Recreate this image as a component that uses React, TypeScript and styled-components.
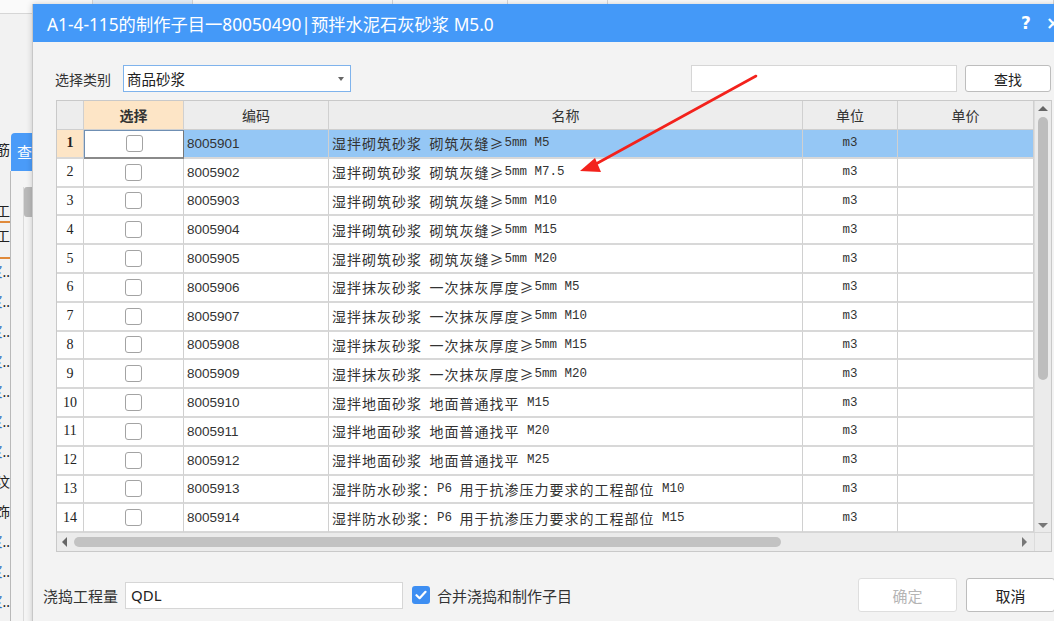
import React from 'react'
import styled, { createGlobalStyle, css } from 'styled-components'

const GlobalStyle = createGlobalStyle`
  html, body {
    margin: 0;
    padding: 0;
    overflow: hidden;
    background: #f2f2f2;
    font-family: "Noto Sans", "Noto Sans CJK SC", sans-serif;
    color: #333;
  }
  * { box-sizing: border-box; }
`

const COLS = '27px 100px 145px 474px 95px 136px'

const Desktop = styled.div`
  position: relative;
  width: 1054px;
  height: 621px;
  overflow: hidden;
  display: flex;
  flex-direction: column;
  background: #f2f2f2;
`

const TopStrip = styled.div`
  height: 14px;
  display: flex;
  background: #fafafa;
  border-bottom: 1px solid #d6d6d6;
`

const StripCell = styled.div<{ $w: number; $tint?: boolean }>`
  width: ${(p) => p.$w}px;
  flex-shrink: 0;
  border-right: 1px solid #d6d6d6;
  background: ${(p) => (p.$tint ? '#e4eef9' : 'transparent')};
`

const Workspace = styled.div`
  flex: 1;
  display: flex;
`

const SideList = styled.div`
  width: 10px;
  overflow: hidden;
  display: flex;
  flex-direction: column;
  padding-top: 123px;
`

const SideItem = styled.div<{ $blue?: boolean; $mark?: boolean; $h?: number }>`
  height: ${(p) => p.$h ?? 30}px;
  flex-shrink: 0;
  display: flex;
  justify-content: flex-end;
  white-space: nowrap;
  font-size: 14px;
  line-height: 26px;
  color: #222;
  ${(p) =>
    p.$blue &&
    css`
      b {
        font-weight: 400;
        color: #2f6fbf;
      }
    `}
  ${(p) =>
    p.$mark &&
    css`
      span {
        border-bottom: 2px solid #e08a3a;
      }
    `}
`

const SidePanel = styled.div`
  width: 22px;
  display: flex;
  flex-direction: column;
  padding-top: 119px;
`

const SideTab = styled.div`
  margin-left: 1px;
  height: 38px;
  background: #4a9bf8;
  border-radius: 4px 0 0 0;
  color: #fff;
  font-size: 15px;
  padding: 8px 0 0 6px;
  overflow: hidden;
  white-space: nowrap;
`

const SideBody = styled.div`
  flex: 1;
  display: flex;
  border-left: 1px solid #b9b9b9;
  background: #f4f4f4;
  padding-top: 16px;
`

const SideScroll = styled.div`
  margin-left: 12px;
  width: 9px;
  border-left: 1px solid #dadada;
  display: flex;
  flex-direction: column;
  align-items: flex-end;
`

const SideThumb = styled.div`
  width: 8px;
  height: 30px;
  background: #b9b9b9;
  border-radius: 3px 0 0 3px;
`

const Dialog = styled.div`
  position: absolute;
  left: 32px;
  top: 4px;
  width: 1036px;
  height: 640px;
  background: #f3f3f3;
  border-left: 1px solid #c7c7c7;
  box-shadow: 0 0 6px rgba(0, 0, 0, 0.18);
  display: flex;
  flex-direction: column;
`

const TitleBar = styled.div`
  height: 38px;
  background: #4499f8;
  color: #fff;
  display: flex;
  align-items: center;
  padding-left: 14px;
  font-size: 17.3px;
`

const TitleText = styled.div`
  flex: 1;
  white-space: nowrap;
`

const TitleButton = styled.div<{ $w: number }>`
  width: ${(p) => p.$w}px;
  text-align: center;
  font-size: 17px;
  font-weight: 700;
  font-family: "DejaVu Sans", sans-serif;
`

const Body = styled.div`
  flex: 1;
  display: flex;
  flex-direction: column;
  padding: 23px 17px 0 10px;
`

const FilterRow = styled.div`
  display: flex;
  align-items: center;
  height: 27px;
  margin-left: 12px;
`

const Label = styled.div<{ $w?: number; $size?: number }>`
  width: ${(p) => (p.$w ? `${p.$w}px` : 'auto')};
  flex-shrink: 0;
  font-size: ${(p) => p.$size ?? 14}px;
  color: #333;
  white-space: nowrap;
`

const Select = styled.div`
  width: 228px;
  height: 27px;
  background: #fff;
  border: 1px solid #7fb3ec;
  display: flex;
  align-items: center;
  padding: 0 5px 0 3px;
  font-size: 14.5px;
  color: #222;
`

const SelectValue = styled.div`
  flex: 1;
`

const Caret = styled.div`
  width: 0;
  height: 0;
  border-left: 3.5px solid transparent;
  border-right: 3.5px solid transparent;
  border-top: 4px solid #666;
  margin-right: 1px;
`

const Spacer = styled.div<{ $w?: number }>`
  flex: ${(p) => (p.$w ? `0 0 ${p.$w}px` : '1')};
`

const TextBox = styled.div<{ $w: number; $h: number }>`
  width: ${(p) => p.$w}px;
  height: ${(p) => p.$h}px;
  background: #fff;
  border: 1px solid #d6d6d6;
  display: flex;
  align-items: center;
  padding-left: 5px;
  font-size: 15px;
  color: #222;
`

const Button = styled.div<{ $w: number; $h: number; $disabled?: boolean; $size?: number }>`
  width: ${(p) => p.$w}px;
  height: ${(p) => p.$h}px;
  flex-shrink: 0;
  background: #fff;
  border: 1px solid ${(p) => (p.$disabled ? '#dedede' : '#bdbdbd')};
  border-radius: 3px;
  display: flex;
  align-items: center;
  justify-content: center;
  font-size: ${(p) => p.$size ?? 14}px;
  color: ${(p) => (p.$disabled ? '#b5b5b5' : '#222')};
`

const TableFrame = styled.div`
  margin: 8px 0 0 13px;
  width: 996px;
  height: 452px;
  border: 1px solid #c9c9c9;
  display: flex;
  flex-direction: column;
  background: #fff;
`

const TableMain = styled.div`
  flex: 1;
  display: flex;
  overflow: hidden;
`

const Grid = styled.div`
  flex: 1;
  display: flex;
  flex-direction: column;
  overflow: hidden;
`

const HeaderRow = styled.div`
  display: grid;
  grid-template-columns: ${COLS};
  height: 29px;
  flex-shrink: 0;
  background: #ededed;
  border-bottom: 1px solid #cfcfcf;
`

const HeadCell = styled.div<{ $accent?: boolean }>`
  border-right: 1px solid #d0d0d0;
  display: flex;
  align-items: center;
  justify-content: center;
  font-size: 14px;
  color: #333;
  background: ${(p) => (p.$accent ? '#fde5c6' : 'transparent')};
  font-weight: ${(p) => (p.$accent ? 700 : 400)};
`

const Row = styled.div`
  display: grid;
  grid-template-columns: ${COLS};
  height: 28.8px;
  flex-shrink: 0;
`

const Cell = styled.div<{ $sel?: boolean; $align?: 'center' | 'left' }>`
  border-right: 1px solid #d0d0d0;
  border-bottom: 2px solid #d8d8d8;
  display: flex;
  align-items: center;
  justify-content: ${(p) => (p.$align === 'left' ? 'flex-start' : 'center')};
  padding-left: ${(p) => (p.$align === 'left' ? '3px' : '0')};
  background: ${(p) => (p.$sel ? '#95c7f5' : '#fff')};
  white-space: nowrap;
  overflow: hidden;
  color: #333;
`

const NumCell = styled(Cell)<{ $current?: boolean }>`
  background: ${(p) => (p.$current ? '#fde5c6' : '#fff')};
  font-family: "Liberation Serif", serif;
  font-size: 14px;
  font-weight: ${(p) => (p.$current ? 700 : 400)};
  color: #222;
`

const CheckCell = styled(Cell)<{ $focus?: boolean }>`
  ${(p) =>
    p.$focus &&
    css`
      border: 1px solid #6f8fb3;
      border-right-color: #777;
      border-bottom: 2px solid #8a8a8a;
    `}
`

const CodeText = styled.span`
  font-family: "Liberation Sans", sans-serif;
  font-size: 13.5px;
  color: #333;
`

const Han = styled.span`
  font-family: "Noto Sans CJK SC", sans-serif;
  font-size: 14px;
  letter-spacing: 1px;
  color: #333;
`

const Latin = styled.span`
  font-family: "Liberation Mono", monospace;
  font-size: 12.5px;
  white-space: pre;
  color: #333;
`

const UnitText = styled.span`
  font-family: "Liberation Mono", monospace;
  font-size: 12.5px;
  color: #333;
`

const Box = styled.div`
  width: 17px;
  height: 17px;
  border: 1px solid #a3a3a3;
  border-radius: 3px;
  background: #fff;
`

const VScroll = styled.div`
  width: 17px;
  flex-shrink: 0;
  background: #ebebeb;
  border-left: 1px solid #dcdcdc;
  display: flex;
  flex-direction: column;
  align-items: center;
  padding: 5px 0 4px;
`

const VThumb = styled.div`
  width: 10px;
  height: 263px;
  margin-top: 6px;
  border-radius: 5px;
  background: #bdbdbd;
`

const Arrow = styled.div<{ $dir: 'up' | 'down' | 'left' | 'right' }>`
  width: 0;
  height: 0;
  ${(p) =>
    p.$dir === 'up' &&
    css`
      border-left: 5px solid transparent;
      border-right: 5px solid transparent;
      border-bottom: 5px solid #666;
    `}
  ${(p) =>
    p.$dir === 'down' &&
    css`
      border-left: 5px solid transparent;
      border-right: 5px solid transparent;
      border-top: 5px solid #777;
    `}
  ${(p) =>
    p.$dir === 'left' &&
    css`
      border-top: 5px solid transparent;
      border-bottom: 5px solid transparent;
      border-right: 5px solid #666;
    `}
  ${(p) =>
    p.$dir === 'right' &&
    css`
      border-top: 5px solid transparent;
      border-bottom: 5px solid transparent;
      border-left: 5px solid #777;
    `}
`

const HScroll = styled.div`
  height: 19px;
  flex-shrink: 0;
  display: flex;
  align-items: center;
  background: #ebebeb;
  border-top: 1px solid #d6d6d6;
  padding-left: 5px;
`

const HTrack = styled.div`
  flex: 1;
  display: flex;
  align-items: center;
  padding-left: 7px;
`

const HThumb = styled.div`
  width: 707px;
  height: 10px;
  border-radius: 5px;
  background: #c2c2c2;
`

const Corner = styled.div`
  width: 17px;
  height: 100%;
  margin-left: 7px;
  background: #ececec;
  border-left: 1px solid #dcdcdc;
`

const BottomRow = styled.div`
  display: flex;
  align-items: center;
  height: 34px;
  margin-top: 26px;
  margin-right: -4px;
`

const Checked = styled.div`
  width: 18px;
  height: 18px;
  margin: 0 7px 0 9px;
  border-radius: 3px;
  background: #3d8ef2;
  display: flex;
  align-items: center;
  justify-content: center;
`

const Annotation = styled.svg`
  position: absolute;
  left: 0;
  top: 0;
  pointer-events: none;
`

type Item = { code: string; name: string }

const items: Item[] = [
  { code: '8005901', name: '湿拌砌筑砂浆 砌筑灰缝≥5mm M5' },
  { code: '8005902', name: '湿拌砌筑砂浆 砌筑灰缝≥5mm M7.5' },
  { code: '8005903', name: '湿拌砌筑砂浆 砌筑灰缝≥5mm M10' },
  { code: '8005904', name: '湿拌砌筑砂浆 砌筑灰缝≥5mm M15' },
  { code: '8005905', name: '湿拌砌筑砂浆 砌筑灰缝≥5mm M20' },
  { code: '8005906', name: '湿拌抹灰砂浆 一次抹灰厚度≥5mm M5' },
  { code: '8005907', name: '湿拌抹灰砂浆 一次抹灰厚度≥5mm M10' },
  { code: '8005908', name: '湿拌抹灰砂浆 一次抹灰厚度≥5mm M15' },
  { code: '8005909', name: '湿拌抹灰砂浆 一次抹灰厚度≥5mm M20' },
  { code: '8005910', name: '湿拌地面砂浆 地面普通找平 M15' },
  { code: '8005911', name: '湿拌地面砂浆 地面普通找平 M20' },
  { code: '8005912', name: '湿拌地面砂浆 地面普通找平 M25' },
  { code: '8005913', name: '湿拌防水砂浆：P6 用于抗渗压力要求的工程部位 M10' },
  { code: '8005914', name: '湿拌防水砂浆：P6 用于抗渗压力要求的工程部位 M15' },
]

type Side = { t: string; dots?: boolean; mark?: boolean; h?: number }

const sideItems: Side[] = [
  { t: '钢筋', h: 61 },
  { t: '人工', mark: true, h: 25 },
  { t: '人工', mark: true, h: 36 },
  { t: '砂浆', dots: true },
  { t: '砂浆', dots: true },
  { t: '砂浆', dots: true },
  { t: '砂浆', dots: true },
  { t: '砂浆', dots: true },
  { t: '砂浆', dots: true },
  { t: '砂浆', dots: true },
  { t: '混凝土浇汶' },
  { t: '装饰' },
  { t: '砂浆', dots: true },
  { t: '砂浆', dots: true },
  { t: '砂浆', dots: true },
]

// ascii runs are half width (mono), the rest full width
const renderName = (s: string) =>
  s
    .split(/([\x20-\x7e]+)/)
    .filter(Boolean)
    .map((part, i) =>
      /^[\x20-\x7e]+$/.test(part) ? <Latin key={i}>{part}</Latin> : <Han key={i}>{part}</Han>
    )

export default function App() {
  return (
    <Desktop>
      <GlobalStyle />
      <TopStrip>
        <StripCell $w={93} />
        <StripCell $w={100} $tint />
        <StripCell $w={200} />
        <StripCell $w={115} />
        <StripCell $w={100} />
        <StripCell $w={446} />
      </TopStrip>
      <Workspace>
        <SideList>
          {sideItems.map((s, i) => (
            <SideItem key={i} $blue={s.dots} $mark={s.mark} $h={s.h}>
              <span>
                {s.dots ? <b>{s.t}</b> : s.t}
                {s.dots && '..'}
              </span>
            </SideItem>
          ))}
        </SideList>
        <SidePanel>
          <SideTab>查</SideTab>
          <SideBody>
            <SideScroll>
              <SideThumb />
            </SideScroll>
          </SideBody>
        </SidePanel>
      </Workspace>

      <Dialog>
        <TitleBar>
          <TitleText>A1-4-115的制作子目一80050490|预拌水泥石灰砂浆 M5.0</TitleText>
          <TitleButton $w={24}>?</TitleButton>
          <TitleButton $w={30}>×</TitleButton>
        </TitleBar>
        <Body>
          <FilterRow>
            <Label $w={68}>选择类别</Label>
            <Select>
              <SelectValue>商品砂浆</SelectValue>
              <Caret />
            </Select>
            <Spacer />
            <TextBox $w={266} $h={27} />
            <Spacer $w={8} />
            <Button $w={86} $h={27}>
              查找
            </Button>
          </FilterRow>

          <TableFrame>
            <TableMain>
              <Grid>
                <HeaderRow>
                  <HeadCell />
                  <HeadCell $accent>选择</HeadCell>
                  <HeadCell>编码</HeadCell>
                  <HeadCell>名称</HeadCell>
                  <HeadCell>单位</HeadCell>
                  <HeadCell>单价</HeadCell>
                </HeaderRow>
                {items.map((it, i) => {
                  const sel = i === 0
                  return (
                    <Row key={it.code}>
                      <NumCell $current={sel}>{i + 1}</NumCell>
                      <CheckCell $focus={sel}>
                        <Box />
                      </CheckCell>
                      <Cell $sel={sel} $align="left">
                        <CodeText>{it.code}</CodeText>
                      </Cell>
                      <Cell $sel={sel} $align="left">
                        {renderName(it.name)}
                      </Cell>
                      <Cell $sel={sel}>
                        <UnitText>m3</UnitText>
                      </Cell>
                      <Cell $sel={sel} />
                    </Row>
                  )
                })}
              </Grid>
              <VScroll>
                <Arrow $dir="up" />
                <VThumb />
                <Spacer />
                <Arrow $dir="down" />
              </VScroll>
            </TableMain>
            <HScroll>
              <Arrow $dir="left" />
              <HTrack>
                <HThumb />
                <Spacer />
                <Arrow $dir="right" />
              </HTrack>
              <Corner />
            </HScroll>
          </TableFrame>

          <BottomRow>
            <Label $w={82} $size={15}>
              浇捣工程量
            </Label>
            <TextBox $w={278} $h={27}>
              QDL
            </TextBox>
            <Checked>
              <svg width="12" height="10" viewBox="0 0 12 10">
                <path d="M1.5 5.2 L4.6 8.2 L10.5 1.8" fill="none" stroke="#fff" strokeWidth="2.2" strokeLinecap="round" strokeLinejoin="round" />
              </svg>
            </Checked>
            <Label $size={15}>合并浇捣和制作子目</Label>
            <Spacer />
            <Button $w={99} $h={34} $disabled $size={15}>
              确定
            </Button>
            <Spacer $w={9} />
            <Button $w={89} $h={34} $size={15}>
              取消
            </Button>
          </BottomRow>
        </Body>
      </Dialog>

      <Annotation width="1054" height="621">
        <line x1="756" y1="76" x2="594" y2="165" stroke="#f3221c" strokeWidth="2.6" strokeLinecap="round" />
        <polygon points="580,171 595,158 601,172" fill="#f3221c" />
      </Annotation>
    </Desktop>
  )
}
